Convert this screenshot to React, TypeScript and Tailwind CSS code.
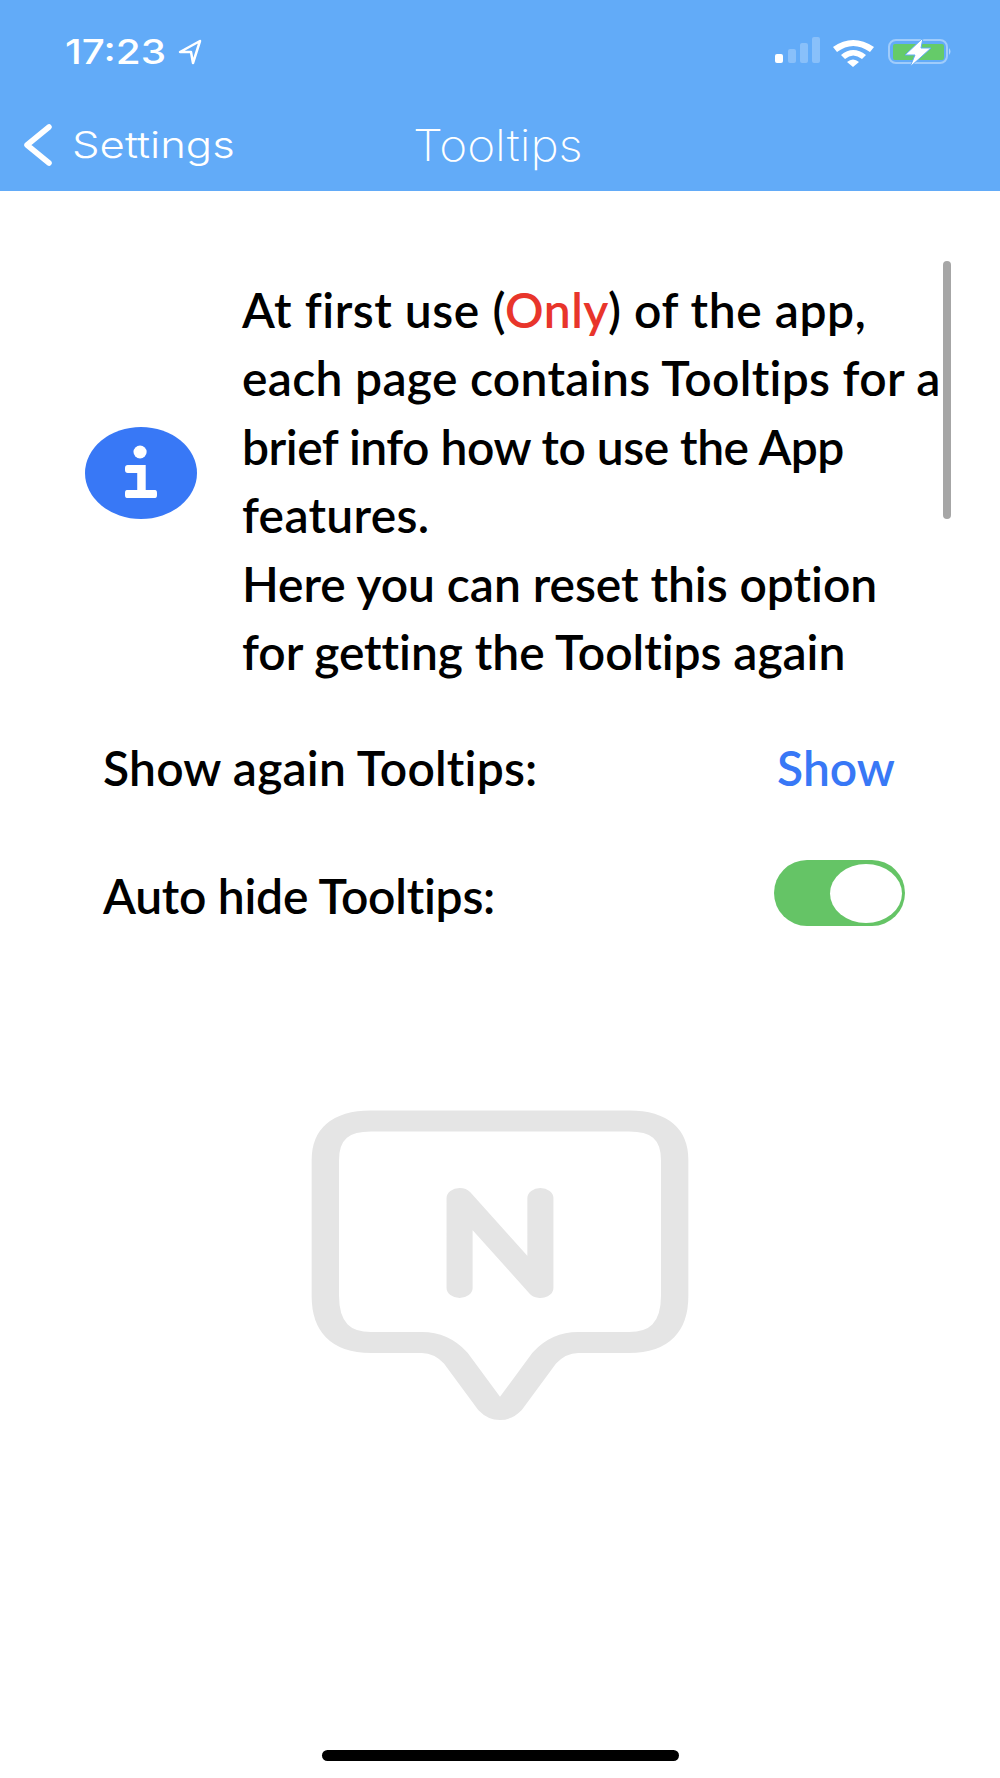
import React from 'react'

const LINES = [
  { text: 'each page contains Tooltips for a', cls: 'tracking-[0.3px]' },
  { text: 'brief info how to use the App', cls: 'tracking-[-0.5px]' },
  { text: 'features.', cls: 'tracking-[0.3px]' },
  { text: 'Here you can reset this option', cls: 'tracking-[-0.05px]' },
  { text: 'for getting the Tooltips again', cls: 'tracking-[-0.05px]' },
]

function StatusIcons() {
  return (
    <svg width="180" height="34" viewBox="0 0 180 34" className="block">
      <rect x="0" y="18" width="8" height="9" rx="2" fill="#fff" />
      <rect x="13" y="13" width="8" height="14" rx="2" fill="#fff" opacity="0.25" />
      <rect x="25" y="7" width="8" height="20" rx="2" fill="#fff" opacity="0.25" />
      <rect x="37" y="1" width="8" height="26" rx="2" fill="#fff" opacity="0.25" />
      <path d="M58 11 Q78 -3 99 11 L95 16 Q78 4 62 16 Z" fill="#fff" />
      <path d="M66 19 Q78 9 91 19 L87 23 Q78 16 70 23 Z" fill="#fff" />
      <path d="M72 26 Q78 21 84 26 L78 31 Z" fill="#fff" />
      <rect x="114" y="4" width="58" height="23" rx="7" fill="none" stroke="#fff" strokeOpacity="0.4" strokeWidth="2" />
      <rect x="118" y="8" width="51" height="16" rx="2" fill="#65cb69" />
      <path d="M174 12 q3 3.5 0 7 Z" fill="#fff" opacity="0.5" />
      <path d="M148 2 L130 19 L140 19 L135 31 L156 12 L146 12 Z" fill="#fff" stroke="#62abf8" strokeWidth="1" />
    </svg>
  )
}

function Logo() {
  return (
    <svg width="378" height="310" viewBox="0 0 290 310" preserveAspectRatio="none" className="block" fill="none" stroke="#e5e5e5" strokeWidth="21">
      <path d="M46 11 H244 Q279 11 279 50 V186 Q279 232.5 244 232.5 H205 Q190 232.5 179 248 L153 294 Q145 305 137 294 L111 248 Q100 232.5 85 232.5 H46 Q11 232.5 11 186 V50 Q11 11 46 11 Z" strokeLinejoin="round" />
      <path d="M114 178 V88 L176 178 V88" strokeWidth="20" strokeLinecap="round" strokeLinejoin="round" />
    </svg>
  )
}

export default function App() {
  return (
    <div className="relative flex h-[1778px] w-[1000px] flex-col overflow-hidden bg-white font-['Lato',sans-serif] text-black">
      {/* nav header, the shot is stretched wide so the text is too */}
      <div className="h-[191px] shrink-0 bg-[#62abf8] font-['Inter',sans-serif] text-white">
        <div className="flex items-start justify-between pl-[65px] pr-[45px] pt-[36px]">
          <div className="flex items-center gap-[27px]">
            <span className="inline-block origin-left scale-x-[1.19] text-[34px] font-medium leading-[32px]">17:23</span>
            <svg width="26" height="26" viewBox="0 0 24 26" fill="none" stroke="#fff" strokeWidth="2.5" strokeLinejoin="round">
              <path d="M22 2 L2 13 L13 13 L15 24 Z" />
            </svg>
          </div>
          <StatusIcons />
        </div>
        <div className="relative mt-[54px] flex items-center pl-[22px]">
          <svg width="32" height="42" viewBox="0 0 32 42" fill="none" stroke="#fff" strokeWidth="5.5" strokeLinecap="round" strokeLinejoin="round">
            <path d="M27 3 L5 21 L27 39" />
          </svg>
          <span className="ml-[18px] inline-block origin-left scale-x-[1.18] text-[37px] font-light leading-[42px]">Settings</span>
          <span className="ml-[203px] inline-block origin-left scale-x-[1.085] text-[44px] font-extralight leading-[42px]">Tooltips</span>
        </div>
      </div>

      {/* intro text with info icon */}
      <div className="relative flex items-center pl-[85px] pt-[69px]">
        <div className="flex h-[92px] w-[112px] shrink-0 flex-col items-center justify-center rounded-[50%] bg-[#3878f6]">
          <svg width="32" height="56" viewBox="0 0 34 56" fill="#fff" preserveAspectRatio="none">
            <ellipse cx="16" cy="7" rx="7" ry="6.5" />
            <path d="M3 20 H22 V45 H32 Q34 45 34 48 V50 Q34 53 32 53 H2 Q0 53 0 50 V48 Q0 45 2 45 H13 V28 H3 Q0 28 0 25 V23 Q0 20 3 20 Z" />
          </svg>
        </div>
        <div className="ml-[45px] pt-[16px] text-[48px] font-semibold leading-[68.4px]">
          <div className="whitespace-nowrap tracking-[0.55px]">
            At first use (<span className="text-[#e8352b]">Only</span>) of the app,
          </div>
          {LINES.map((line) => (
            <div key={line.text} className={`whitespace-nowrap ${line.cls}`}>
              {line.text}
            </div>
          ))}
        </div>
        <div className="absolute left-[943px] top-[70px] h-[258px] w-[8px] rounded-full bg-[#a6a6a6]" />
      </div>

      {/* options */}
      <div className="mt-[48px] flex flex-col pl-[103px] pr-[95px] text-[48px] font-semibold">
        <div className="flex h-[68px] items-center justify-between">
          <span className="tracking-[0.2px]">Show again Tooltips:</span>
          <span className="mr-[10px] text-[#3878f6]">Show</span>
        </div>
        <div className="mt-[58px] flex h-[66px] items-center justify-between">
          <span className="pt-[6px] tracking-[-0.25px]">Auto hide Tooltips:</span>
          <div className="flex h-[66px] w-[131px] items-center justify-end rounded-full bg-[#65c466] pr-[3px]">
            <div className="h-[59px] w-[72px] rounded-[50%] bg-white" />
          </div>
        </div>
      </div>

      {/* watermark logo */}
      <div className="mt-[184px] flex justify-center">
        <Logo />
      </div>

      {/* home indicator */}
      <div className="mt-auto mb-[17px] flex justify-center">
        <div className="h-[11px] w-[357px] rounded-full bg-black" />
      </div>
    </div>
  )
}
